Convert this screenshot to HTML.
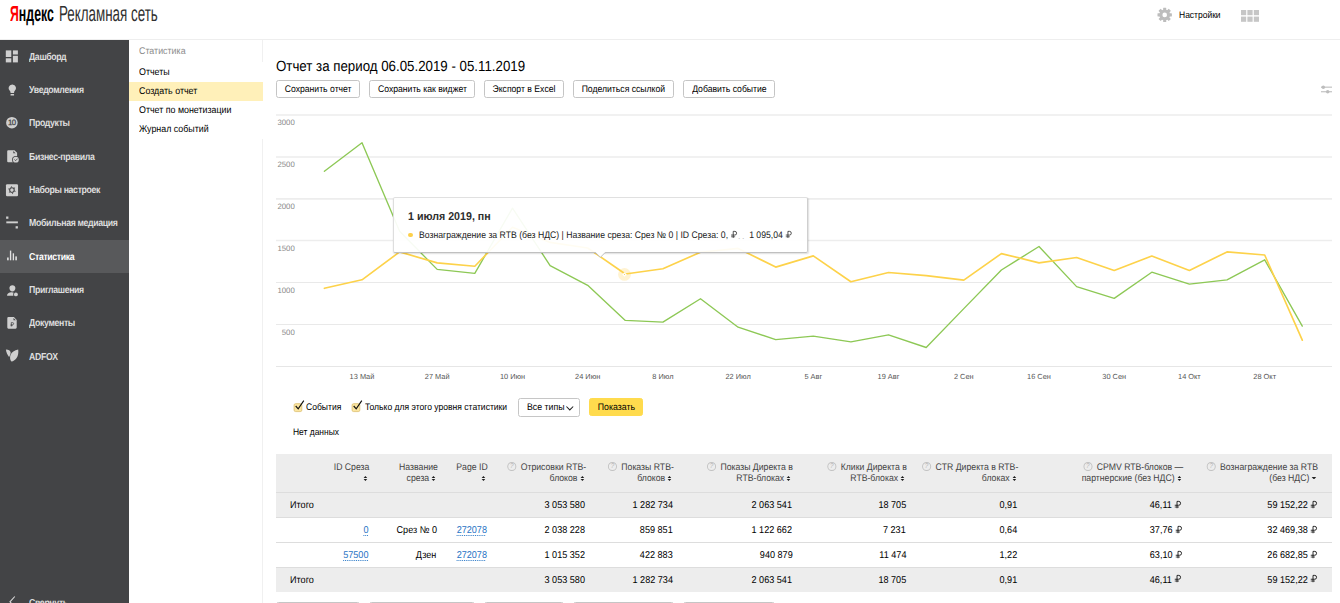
<!DOCTYPE html>
<html lang="ru">
<head>
<meta charset="utf-8">
<title>Яндекс Рекламная сеть</title>
<style>

*{box-sizing:border-box;margin:0;padding:0}
html,body{width:1340px;height:603px;overflow:hidden;background:#fff}
body{font-family:"Liberation Sans",sans-serif;font-size:9.1px;color:#000;position:relative;line-height:1;text-rendering:geometricPrecision}
.abs{position:absolute;white-space:nowrap}
svg{position:absolute;overflow:visible}
.t{display:inline-block;white-space:nowrap;transform-origin:0 0}

/* header */
#hdr{position:absolute;left:0;top:0;width:1340px;height:40px;background:#fff;border-bottom:1px solid #eeeeee}
.lg{position:absolute;top:2.4px;height:24px;white-space:nowrap;font-size:21.9px;line-height:24px;transform-origin:0 0}
#lg1{left:9.7px;font-weight:700;color:#000;transform:scaleX(0.563)}
#lg1 i{font-style:normal;color:#ff0000}
#lg2{left:59.2px;font-weight:400;color:#303030;transform:scaleX(0.611)}
#settings{left:1178.5px;top:9.5px;font-size:9.5px;line-height:11px;color:#000;transform-origin:0 0;transform:scaleX(0.893)}

/* main sidebar */
#side{position:absolute;left:0;top:40px;width:129px;height:563px;background:#434446}
.mi{position:absolute;left:0;width:129px;height:33.3px;color:#dedede;font-weight:700;font-size:10.1px;letter-spacing:-0.4px}
.mi span{position:absolute;left:28.8px;top:11.2px;line-height:12px;white-space:nowrap;transform-origin:0 0;transform:scaleX(0.865)}
.mi.act{background:#58595b;color:#fff}
.mi svg{left:5px;top:8.6px;width:16px;height:16px}

/* sub menu */
#sub{position:absolute;left:129px;top:40px;width:134px;height:563px;background:#fff}
.vl{position:absolute;left:262.4px;width:1px;background:#f0f0f0}
.si{position:absolute;left:0;width:134px;height:19px;font-size:9.8px;line-height:19px;padding-left:10px;color:#000;white-space:nowrap}
.si .t{transform:scaleX(0.905)}
.si.h{color:#8c8c8c}
.si.act{background:#fff0b9}

/* content */
#title{left:276.4px;top:59.2px;font-size:14.7px;line-height:16px;color:#000;transform-origin:0 0;transform:scaleX(0.905)}
.btn{position:absolute;top:80px;height:18px;border:1px solid #c5c5c5;border-radius:2.5px;background:#fff;font-size:9.6px;line-height:18px;text-align:center;white-space:nowrap;color:#000}
.btn .t{transform-origin:50% 0;transform:scaleX(0.9)}
.btn.y{background:#ffdb4d;border-color:#ffdb4d}

/* chart */
.yl{position:absolute;left:254.800px;width:40px;text-align:right;font-size:7.8px;line-height:8px;color:#8a8a8a}
.xl{position:absolute;top:372.5px;width:60px;margin-left:-30px;text-align:center;font-size:7.4px;line-height:8px;color:#555}
#tip{position:absolute;left:393.200px;top:197px;width:414.500px;height:55.800px;background:rgba(255,255,255,0.93);border:1px solid;border-color:#e0e0e0 #cfcfcf #c0c0c0 #dedede;border-radius:2px;box-shadow:0.500px 1px 1.500px rgba(0,0,0,0.130)}
#tip .th{position:absolute;left:14.100px;top:12.500px;font-size:11.4px;line-height:13px;font-weight:700;color:#2e2e2e;white-space:nowrap;transform-origin:0 0;transform:scaleX(0.935)}
#tip .tl{position:absolute;left:24.800px;top:32.500px;font-size:9.5px;line-height:10px;color:#222;white-space:nowrap;transform-origin:0 0;transform:scaleX(0.912)}
#tip .tv{position:absolute;right:15.200px;top:32.500px;font-size:9.5px;line-height:10px;color:#222;white-space:nowrap;transform-origin:100% 0;transform:scaleX(0.912)}
#tip .dot{position:absolute;left:14px;top:34.600px;width:4.400px;height:4.400px;border-radius:50%;background:#fdd04a}
#tip .dd{position:absolute;left:343.800px;top:33px;font-size:8.67px;line-height:10px;color:#bbb;letter-spacing:1.5px}

/* ruble sign */
svg.rub{position:static;display:inline-block;width:0.74em;height:0.72em;vertical-align:0;overflow:visible;margin-left:0.03em}

/* controls */
.cb{position:absolute;top:402.8px;width:8.7px;height:8.7px;background:#fbe5a0;border:1px solid #dfc170;border-radius:1.8px}
.cbt{top:402px;font-size:9.5px;line-height:11px;transform-origin:0 0;transform:scaleX(0.9)}

/* table */
#tbl{position:absolute;left:276px;top:454px;width:1055.5px;height:138px;background:#fff}
.tr{position:absolute;left:0;width:1055.5px}
.tr.g{background:#ededed}
.tr.b{border-top:1px solid #dddddd}
.c{position:absolute;white-space:nowrap;text-align:right;font-size:9.9px;line-height:11px;color:#000;transform:scaleX(0.92);transform-origin:100% 0}
.c.lf{transform-origin:0 0}
.hc{position:absolute;white-space:nowrap;text-align:right;font-size:9.6px;line-height:11.1px;color:#444;transform:scaleX(0.905);transform-origin:100% 0}
.q{display:inline-block;width:10px;height:9.1px;border:1px solid #c2c2c2;border-radius:50%;vertical-align:-1.6px;margin-right:4.800px;position:relative}
.q:after{content:"?";position:absolute;left:0;top:0;width:8px;text-align:center;font-size:7px;line-height:7.400px;color:#b4b4b4}
.srt{display:inline-block;width:4.400px;height:5.100px;vertical-align:-0.200px;margin-left:3px;margin-right:2.200px;position:relative}
.srt:before{content:"";position:absolute;left:0;top:0;border:2.200px solid transparent;border-top:0;border-bottom:2.450px solid #1c1c1c}
.srt:after{content:"";position:absolute;left:0;bottom:0;border:2.200px solid transparent;border-bottom:0;border-top:2.450px solid #1c1c1c}
.dn{display:inline-block;width:4.400px;height:2.400px;vertical-align:1.400px;margin-left:3px;margin-right:2.200px;border:2.200px solid transparent;border-bottom:0;border-top:2.400px solid #222}
a.l{color:#1f72c4;text-decoration:underline dotted #1f72c4;text-decoration-thickness:1px;text-underline-offset:1.6px}

</style>
</head>
<body>

<div id="hdr">
  <div id="lg1" class="lg"><i>Я</i>ндекс</div><div id="lg2" class="lg">Рекламная сеть</div>
  <svg style="left:1156.900px;top:7.300px;width:15.400px;height:15.800px" viewBox="-8 -8 16 16"><g fill="#bdbdbd"><path fill-rule="evenodd" d="M0-5.600a5.600 5.600 0 1 0 0 11.200A5.600 5.600 0 0 0 0-5.600zm0 3.200a2.400 2.400 0 1 1 0 4.800 2.400 2.400 0 0 1 0-4.800z"/><rect x="-1.600" y="-7.500" width="3.200" height="3" rx="0.400" transform="rotate(0)"/><rect x="-1.600" y="-7.500" width="3.200" height="3" rx="0.400" transform="rotate(45)"/><rect x="-1.600" y="-7.500" width="3.200" height="3" rx="0.400" transform="rotate(90)"/><rect x="-1.600" y="-7.500" width="3.200" height="3" rx="0.400" transform="rotate(135)"/><rect x="-1.600" y="-7.500" width="3.200" height="3" rx="0.400" transform="rotate(180)"/><rect x="-1.600" y="-7.500" width="3.200" height="3" rx="0.400" transform="rotate(225)"/><rect x="-1.600" y="-7.500" width="3.200" height="3" rx="0.400" transform="rotate(270)"/><rect x="-1.600" y="-7.500" width="3.200" height="3" rx="0.400" transform="rotate(315)"/></g></svg>
  <div id="settings" class="abs">Настройки</div>
  <svg style="left:1241.200px;top:10px;width:18px;height:12px" viewBox="0 0 18 12"><g fill="#c6c6c6"><rect x="0.0" y="0.0" width="5.200" height="5.200"/><rect x="6.4" y="0.0" width="5.200" height="5.200"/><rect x="12.8" y="0.0" width="5.200" height="5.200"/><rect x="0.0" y="6.6" width="5.200" height="5.200"/><rect x="6.4" y="6.6" width="5.200" height="5.200"/><rect x="12.8" y="6.6" width="5.200" height="5.200"/></g></svg>
</div>
<div id="side">
<div class="mi" style="top:0.0px"><svg viewBox="0 0 16 16"><g fill="#cfcfcf"><rect x="0.8" y="1.4" width="5.5" height="6.6"/><rect x="0.8" y="9.3" width="5.5" height="4.1"/><rect x="7.9" y="1.4" width="5" height="4.1"/><rect x="7.9" y="6.8" width="5" height="6.6"/></g></svg><span style="top:12.40px">Дашборд</span></div>
<div class="mi" style="top:33.3px"><svg viewBox="0 0 16 16"><g fill="#cfcfcf"><path d="M7.3 2.5a3.7 3.7 0 0 0-2.2 6.7c.3.3.4.6.4 1v.9h3.6v-.9c0-.4.1-.7.4-1A3.7 3.7 0 0 0 7.3 2.5z"/><rect x="5.500" y="11.900" width="3.600" height="1.600" rx="0.500"/></g></svg><span style="top:12.10px">Уведомления</span></div>
<div class="mi" style="top:66.6px"><svg viewBox="0 0 16 16"><circle cx="6.9" cy="7.7" r="5.8" fill="#cfcfcf"/><text x="6.800" y="10.400" font-size="7.800" font-weight="400" text-anchor="middle" fill="#434446" stroke="#434446" stroke-width="0.250" font-family="Liberation Sans" letter-spacing="-0.500">10</text></svg><span style="top:11.80px">Продукты</span></div>
<div class="mi" style="top:99.9px"><svg viewBox="0 -0.650 16 16"><path d="M3.200 1.500h6.300l2.600 2.700v8.300a1 1 0 0 1-1 1H3.200a1 1 0 0 1-1-1V2.500a1 1 0 0 1 1-1z" fill="#cfcfcf"/><path d="M8.300 2.300v2.300h2.200z" fill="#434446"/><circle cx="10.850" cy="11" r="3.750" fill="#434446"/><circle cx="10.850" cy="11" r="2.950" fill="#cfcfcf"/><path d="M9.350 10.800l1.250 1.250 2.050-2.100" fill="none" stroke="#434446" stroke-width="0.850"/></svg><span style="top:12.50px">Бизнес-правила</span></div>
<div class="mi" style="top:133.2px"><svg viewBox="0 0 16 16"><rect x="0.950" y="2.200" width="12.100" height="12.100" rx="1.200" fill="#cfcfcf"/><g transform="translate(6.950 8.100)"><circle r="2.300" fill="none" stroke="#434446" stroke-width="1.050"/><g fill="#434446"><path d="M-0.900 -2.600L0.500 -4.050L0.900 -2.600z" transform="rotate(-15)"/><path d="M-0.900 -2.600L0.500 -4.050L0.900 -2.600z" transform="rotate(45)"/><path d="M-0.900 -2.600L0.500 -4.050L0.900 -2.600z" transform="rotate(105)"/><path d="M-0.900 -2.600L0.500 -4.050L0.900 -2.600z" transform="rotate(165)"/><path d="M-0.900 -2.600L0.500 -4.050L0.900 -2.600z" transform="rotate(225)"/><path d="M-0.900 -2.600L0.500 -4.050L0.900 -2.600z" transform="rotate(285)"/></g></g></svg><span style="top:12.20px">Наборы настроек</span></div>
<div class="mi" style="top:166.5px"><svg viewBox="0 0 16 16"><g fill="#cfcfcf"><rect x="1.100" y="1.500" width="2.300" height="2.300"/><rect x="1.300" y="6.400" width="11.600" height="1.900"/><rect x="10.600" y="11.200" width="2.300" height="2.300"/></g></svg><span style="top:11.90px">Мобильная медиация</span></div>
<div class="mi act" style="top:199.8px"><svg viewBox="0 0 16 16"><g fill="#e2e2e2"><rect x="2.100" y="9.500" width="1.600" height="2.800"/><rect x="4.900" y="2.600" width="1.350" height="9.700"/><rect x="7.700" y="5.300" width="1.350" height="7"/><rect x="10.300" y="8.400" width="1.600" height="3.900"/></g></svg><span style="top:12.60px">Статистика</span></div>
<div class="mi" style="top:233.1px"><svg viewBox="0 0 16 16"><g fill="#cfcfcf"><path d="M7.400 3.200c1.800 0 3 1.100 3 2.900 0 1.900-1.300 3.500-3 3.500s-3-1.600-3-3.500c0-1.800 1.200-2.900 3-2.900z"/><path d="M2 13.800c0-2.100 1.900-3.500 4.500-3.500 1.100 0 2 .3 2.600.7l-.3 2.800z"/><circle cx="10.900" cy="12.400" r="2.700" fill="#434446"/><circle cx="10.900" cy="12.400" r="1.950"/></g></svg><span style="top:12.30px">Приглашения</span></div>
<div class="mi" style="top:266.4px"><svg viewBox="0 0 16 16"><path d="M3.400 2.100h5.500l2.800 2.800v7.700a1.100 1.100 0 0 1-1.100 1.100H3.400a1.100 1.100 0 0 1-1.100-1.100V3.200a1.100 1.100 0 0 1 1.100-1.100z" fill="#cfcfcf"/><path d="M8.500 2.900v2.300h2.300z" fill="#434446"/><path d="M6.300 11.400V7.600h1.300a1.050 1.050 0 0 1 0 2.100H5.700M5.700 10.600h1.900" fill="none" stroke="#434446" stroke-width="0.750"/></svg><span style="top:12.00px">Документы</span></div>
<div class="mi" style="top:299.7px"><svg viewBox="0 0 16 16"><g fill="#cfcfcf"><path d="M0.900 1.600C3.600 1.700 5.400 2.800 5.600 4.600C5.700 6 5.100 7.400 4.100 8.900C2.300 6.900 1.200 4.400 0.900 1.600z"/><path d="M13.200 1.400C13.600 4.600 13.200 7.600 11.600 10C10.400 11.900 8.500 13.200 6.400 13.600C5 11.600 4.700 9.200 5.500 6.900C6.500 4.100 9.500 2.100 13.200 1.400z"/></g></svg><span style="top:12.70px">ADFOX</span></div>

  <svg style="left:8.500px;top:555.500px;width:7px;height:12px" viewBox="0 0 7 12"><path d="M5.800 0.500L1 5.800l4.800 5.300" fill="none" stroke="#d8d8d8" stroke-width="1.100"/></svg>
  <div class="mi" style="top:546.500px"><span>Свернуть</span></div>
</div>
<div id="sub">
  <div class="si h" style="top:2.100px"><span class="t">Статистика</span></div>
  <div class="si" style="top:22.500px"><span class="t">Отчеты</span></div>
  <div class="si act" style="top:42.300px"><span class="t">Создать отчет</span></div>
  <div class="si" style="top:60.500px"><span class="t">Отчет по монетизации</span></div>
  <div class="si" style="top:80.100px"><span class="t">Журнал событий</span></div>
</div>
<svg style="left:1321px;top:85px;width:11px;height:9px" viewBox="0 0 11 9"><g fill="#bdbdbd"><rect x="0" y="1.600" width="11" height="1.100"/><rect x="0" y="6.200" width="11" height="1.100"/><circle cx="2.300" cy="2.150" r="1.750"/><circle cx="6.700" cy="6.750" r="1.750"/></g></svg>
<div class="vl" style="top:40px;height:22.300px"></div><div class="vl" style="top:139px;height:464px"></div>


<div id="title" class="abs">Отчет за период 06.05.2019 - 05.11.2019</div>
<div class="btn" style="left:276.3px;width:83.7px"><span class="t">Сохранить отчет</span></div><div class="btn" style="left:369.4px;width:105.7px"><span class="t">Сохранить как виджет</span></div><div class="btn" style="left:484.2px;width:79.7px"><span class="t">Экспорт в Excel</span></div><div class="btn" style="left:573px;width:101.2px"><span class="t">Поделиться ссылкой</span></div><div class="btn" style="left:683.1px;width:92.3px"><span class="t">Добавить событие</span></div>
<svg style="left:0;top:0;width:1340px;height:603px" viewBox="0 0 1340 603">
<rect x="276" y="114.25" width="1056" height="1.5" fill="#ededed"/><rect x="276" y="156.25" width="1056" height="1.5" fill="#ededed"/><rect x="276" y="198.05" width="1056" height="1.7" fill="#ededed"/><rect x="276" y="239.75" width="1056" height="1.5" fill="#ededed"/><rect x="276" y="282" width="1056" height="1" fill="#e9e9e9"/><rect x="276" y="324" width="1056" height="1" fill="#e9e9e9"/><rect x="276" y="366" width="1056" height="1" fill="#e6e6e6"/>
<circle cx="624.500" cy="274.450" r="6.400" fill="#fff3d2"/>
<path d="M324.4 171.3 L362.0 142.7 L399.6 231.3 L437.2 269.4 L474.8 273.4 L512.5 208.1 L550.1 265.6 L587.7 285.3 L625.3 320.4 L662.9 322.1 L700.5 298.7 L738.1 327.2 L775.7 339.6 L813.3 336.2 L850.9 341.9 L888.5 334.8 L926.2 347.5 L963.8 308.6 L1001.4 270.0 L1039.0 246.5 L1076.6 286.6 L1114.2 298.4 L1151.8 272.2 L1189.4 284.1 L1227.0 279.8 L1264.7 259.8 L1302.3 326.1" fill="none" stroke="#8dc855" stroke-width="1.35" stroke-linejoin="round" stroke-linecap="round"/>
<path d="M324.4 288.3 L362.0 279.8 L399.6 251.9 L437.2 262.9 L474.8 266.2 L512.5 227.3 L550.1 242.4 L587.7 248.0 L625.3 274.0 L662.9 268.8 L700.5 252.2 L738.1 248.4 L775.7 267.1 L813.3 255.9 L850.9 281.8 L888.5 272.5 L926.2 275.6 L963.8 280.1 L1001.4 253.6 L1039.0 262.9 L1076.6 257.5 L1114.2 270.5 L1151.8 256.1 L1189.4 270.5 L1227.0 251.9 L1264.7 255.0 L1302.3 340.2" fill="none" stroke="#fdd24a" stroke-width="1.65" stroke-linejoin="round" stroke-linecap="round"/>
<path d="M624.500 272.150L626.800 274.450L624.500 276.750L622.200 274.450z" fill="#fff"/>
<circle cx="624.5" cy="274.45" r="0.55" fill="#fdd24a"/>
</svg>
<div class="yl" style="top:118.7px">3000</div><div class="yl" style="top:160.7px">2500</div><div class="yl" style="top:202.7px">2000</div><div class="yl" style="top:244.7px">1500</div><div class="yl" style="top:286.7px">1000</div><div class="yl" style="top:328.7px">500</div>
<div class="xl" style="left:362.0px">13 Май</div><div class="xl" style="left:437.2px">27 Май</div><div class="xl" style="left:512.5px">10 Июн</div><div class="xl" style="left:587.7px">24 Июн</div><div class="xl" style="left:662.9px">8 Июл</div><div class="xl" style="left:738.1px">22 Июл</div><div class="xl" style="left:813.3px">5 Авг</div><div class="xl" style="left:888.5px">19 Авг</div><div class="xl" style="left:963.8px">2 Сен</div><div class="xl" style="left:1039.0px">16 Сен</div><div class="xl" style="left:1114.2px">30 Сен</div><div class="xl" style="left:1189.4px">14 Окт</div><div class="xl" style="left:1264.7px">28 Окт</div>
<div id="tip">
  <div class="th">1 июля 2019, пн</div>
  <div class="dot"></div>
  <div class="tl">Вознаграждение за RTB (без НДС) | Название среза: Срез № 0 | ID Среза: 0, <svg class="rub" viewBox="0 0 76 74"><path d="M27.500 75V4h20a20 20 0 0 1 0 40H2" fill="none" stroke="currentColor" stroke-width="8.800"/><path d="M2 62.500h48" fill="none" stroke="currentColor" stroke-width="7.600"/></svg></div>
  <div class="dd">..</div>
  <div class="tv">1 095,04 <svg class="rub" viewBox="0 0 76 74"><path d="M27.500 75V4h20a20 20 0 0 1 0 40H2" fill="none" stroke="currentColor" stroke-width="8.800"/><path d="M2 62.500h48" fill="none" stroke="currentColor" stroke-width="7.600"/></svg></div>
</div>
<svg style="left:595px;top:251.900px;width:11px;height:7px" viewBox="0 0 11 7"><path d="M0.300 0H10.400L5.400 5.100z" fill="#fff"/><path d="M0.200 0.900L0.900 0.900L5.400 5.300L9.800 0.900L10.500 0.900" fill="none" stroke="#c0c0c0" stroke-width="1"/></svg>

<svg style="left:292.5px;top:399.500px;width:13px;height:13px" viewBox="0 0 13 13"><rect x="1.100" y="3.650" width="7.700" height="7.950" rx="1.500" fill="#fbe5a0" stroke="#dcbf6e" stroke-width="0.800"/><path d="M2.700 6L5.200 8.800L10.800 0.700" fill="none" stroke="#111" stroke-width="1.150"/></svg>
<div class="abs cbt" style="left:306.400px">События</div>
<svg style="left:350.5px;top:399.500px;width:13px;height:13px" viewBox="0 0 13 13"><rect x="1.100" y="3.650" width="7.700" height="7.950" rx="1.500" fill="#fbe5a0" stroke="#dcbf6e" stroke-width="0.800"/><path d="M2.700 6L5.200 8.800L10.800 0.700" fill="none" stroke="#111" stroke-width="1.150"/></svg>
<div class="abs cbt" style="left:365px">Только для этого уровня статистики</div>
<div class="btn" style="left:518.400px;top:398px;width:61.200px;height:19px;text-align:left;padding-left:7.200px;border-color:#c6c6c6"><span class="t" style="transform-origin:0 0;transform:scaleX(0.912)">Все типы</span><svg style="left:46.800px;top:7.300px;width:7.600px;height:4.600px" viewBox="0 0 7.600 4.600"><path d="M0.400 0.500L3.800 3.900L7.200 0.500" fill="none" stroke="#222" stroke-width="1.050"/></svg></div>
<div class="btn y" style="left:589.100px;top:398px;width:54px;height:18px"><span class="t" style="transform:scaleX(0.910)">Показать</span></div>
<div class="abs cbt" style="left:293.300px;top:426px;font-size:9.400px;transform:scaleX(0.9)">Нет данных</div>
<div class="btn" style="left:276.3px;width:83.7px;top:601.600px"></div><div class="btn" style="left:369.4px;width:105.7px;top:601.600px"></div><div class="btn" style="left:484.2px;width:79.7px;top:601.600px"></div><div class="btn" style="left:573px;width:101.2px;top:601.600px"></div><div class="btn" style="left:683.1px;width:92.3px;top:601.600px"></div>


<div id="tbl">
<div class="tr g" style="top:0;height:38.300px"><div class="hc" style="right:962.5px;top:7.800px">ID Среза<br>&#8203;<i class="srt"></i></div><div class="hc" style="right:893.9px;top:7.800px">Название<br>среза<i class="srt"></i></div><div class="hc" style="right:843.5px;top:7.800px">Page ID<br>&#8203;<i class="srt"></i></div><div class="hc" style="right:745.5px;top:7.800px"><i class="q"></i>Отрисовки RTB-<br>блоков<i class="srt"></i></div><div class="hc" style="right:657.5px;top:7.800px"><i class="q"></i>Показы RTB-<br>блоков<i class="srt"></i></div><div class="hc" style="right:538.3px;top:7.800px"><i class="q"></i>Показы Директа в<br>RTB-блоках<i class="srt"></i></div><div class="hc" style="right:424.5px;top:7.800px"><i class="q"></i>Клики Директа в<br>RTB-блоках<i class="srt"></i></div><div class="hc" style="right:313.5px;top:7.800px"><i class="q"></i>CTR Директа в RTB-<br>блоках<i class="srt"></i></div><div class="hc" style="right:148.5px;top:7.800px"><i class="q"></i>CPMV RTB-блоков —<br>партнерские (без НДС)<i class="srt"></i></div><div class="hc" style="right:13.5px;top:7.800px"><i class="q"></i>Вознаграждение за RTB<br>(без НДС)<i class="dn"></i></div></div>
<div class="tr g b" style="top:38.3px;height:24.9px"><div class="c lf" style="left:14.400px;top:6.500px">Итого</div><div class="c" style="right:746.4px;top:6.500px">3 053 580</div><div class="c" style="right:658.4px;top:6.500px">1 282 734</div><div class="c" style="right:539.2px;top:6.500px">2 063 541</div><div class="c" style="right:425.4px;top:6.500px">18 705</div><div class="c" style="right:314.4px;top:6.500px">0,91</div><div class="c" style="right:149.8px;top:6.500px">46,11 <svg class="rub" viewBox="0 0 76 74"><path d="M27.500 75V4h20a20 20 0 0 1 0 40H2" fill="none" stroke="currentColor" stroke-width="8.800"/><path d="M2 62.500h48" fill="none" stroke="currentColor" stroke-width="7.600"/></svg></div><div class="c" style="right:14.1px;top:6.500px">59 152,22 <svg class="rub" viewBox="0 0 76 74"><path d="M27.500 75V4h20a20 20 0 0 1 0 40H2" fill="none" stroke="currentColor" stroke-width="8.800"/><path d="M2 62.500h48" fill="none" stroke="currentColor" stroke-width="7.600"/></svg></div></div>

<div class="tr b" style="top:63.2px;height:25px"><div class="c" style="right:963.4px;top:6.500px"><a class="l">0</a></div><div class="c" style="right:894.8px;top:6.500px">Срез № 0</div><div class="c" style="right:844.4px;top:6.500px"><a class="l">272078</a></div><div class="c" style="right:746.4px;top:6.500px">2 038 228</div><div class="c" style="right:658.4px;top:6.500px">859 851</div><div class="c" style="right:539.2px;top:6.500px">1 122 662</div><div class="c" style="right:425.4px;top:6.500px">7 231</div><div class="c" style="right:314.4px;top:6.500px">0,64</div><div class="c" style="right:149.8px;top:6.500px">37,76 <svg class="rub" viewBox="0 0 76 74"><path d="M27.500 75V4h20a20 20 0 0 1 0 40H2" fill="none" stroke="currentColor" stroke-width="8.800"/><path d="M2 62.500h48" fill="none" stroke="currentColor" stroke-width="7.600"/></svg></div><div class="c" style="right:14.1px;top:6.500px">32 469,38 <svg class="rub" viewBox="0 0 76 74"><path d="M27.500 75V4h20a20 20 0 0 1 0 40H2" fill="none" stroke="currentColor" stroke-width="8.800"/><path d="M2 62.500h48" fill="none" stroke="currentColor" stroke-width="7.600"/></svg></div></div>

<div class="tr b" style="top:88.2px;height:24.8px"><div class="c" style="right:963.4px;top:6.500px"><a class="l">57500</a></div><div class="c" style="right:894.8px;top:6.500px">Дзен</div><div class="c" style="right:844.4px;top:6.500px"><a class="l">272078</a></div><div class="c" style="right:746.4px;top:6.500px">1 015 352</div><div class="c" style="right:658.4px;top:6.500px">422 883</div><div class="c" style="right:539.2px;top:6.500px">940 879</div><div class="c" style="right:425.4px;top:6.500px">11 474</div><div class="c" style="right:314.4px;top:6.500px">1,22</div><div class="c" style="right:149.8px;top:6.500px">63,10 <svg class="rub" viewBox="0 0 76 74"><path d="M27.500 75V4h20a20 20 0 0 1 0 40H2" fill="none" stroke="currentColor" stroke-width="8.800"/><path d="M2 62.500h48" fill="none" stroke="currentColor" stroke-width="7.600"/></svg></div><div class="c" style="right:14.1px;top:6.500px">26 682,85 <svg class="rub" viewBox="0 0 76 74"><path d="M27.500 75V4h20a20 20 0 0 1 0 40H2" fill="none" stroke="currentColor" stroke-width="8.800"/><path d="M2 62.500h48" fill="none" stroke="currentColor" stroke-width="7.600"/></svg></div></div>

<div class="tr g b" style="top:113px;height:24.7px"><div class="c lf" style="left:14.400px;top:6.500px">Итого</div><div class="c" style="right:746.4px;top:6.500px">3 053 580</div><div class="c" style="right:658.4px;top:6.500px">1 282 734</div><div class="c" style="right:539.2px;top:6.500px">2 063 541</div><div class="c" style="right:425.4px;top:6.500px">18 705</div><div class="c" style="right:314.4px;top:6.500px">0,91</div><div class="c" style="right:149.8px;top:6.500px">46,11 <svg class="rub" viewBox="0 0 76 74"><path d="M27.500 75V4h20a20 20 0 0 1 0 40H2" fill="none" stroke="currentColor" stroke-width="8.800"/><path d="M2 62.500h48" fill="none" stroke="currentColor" stroke-width="7.600"/></svg></div><div class="c" style="right:14.1px;top:6.500px">59 152,22 <svg class="rub" viewBox="0 0 76 74"><path d="M27.500 75V4h20a20 20 0 0 1 0 40H2" fill="none" stroke="currentColor" stroke-width="8.800"/><path d="M2 62.500h48" fill="none" stroke="currentColor" stroke-width="7.600"/></svg></div></div>

</div>

</body>
</html>
